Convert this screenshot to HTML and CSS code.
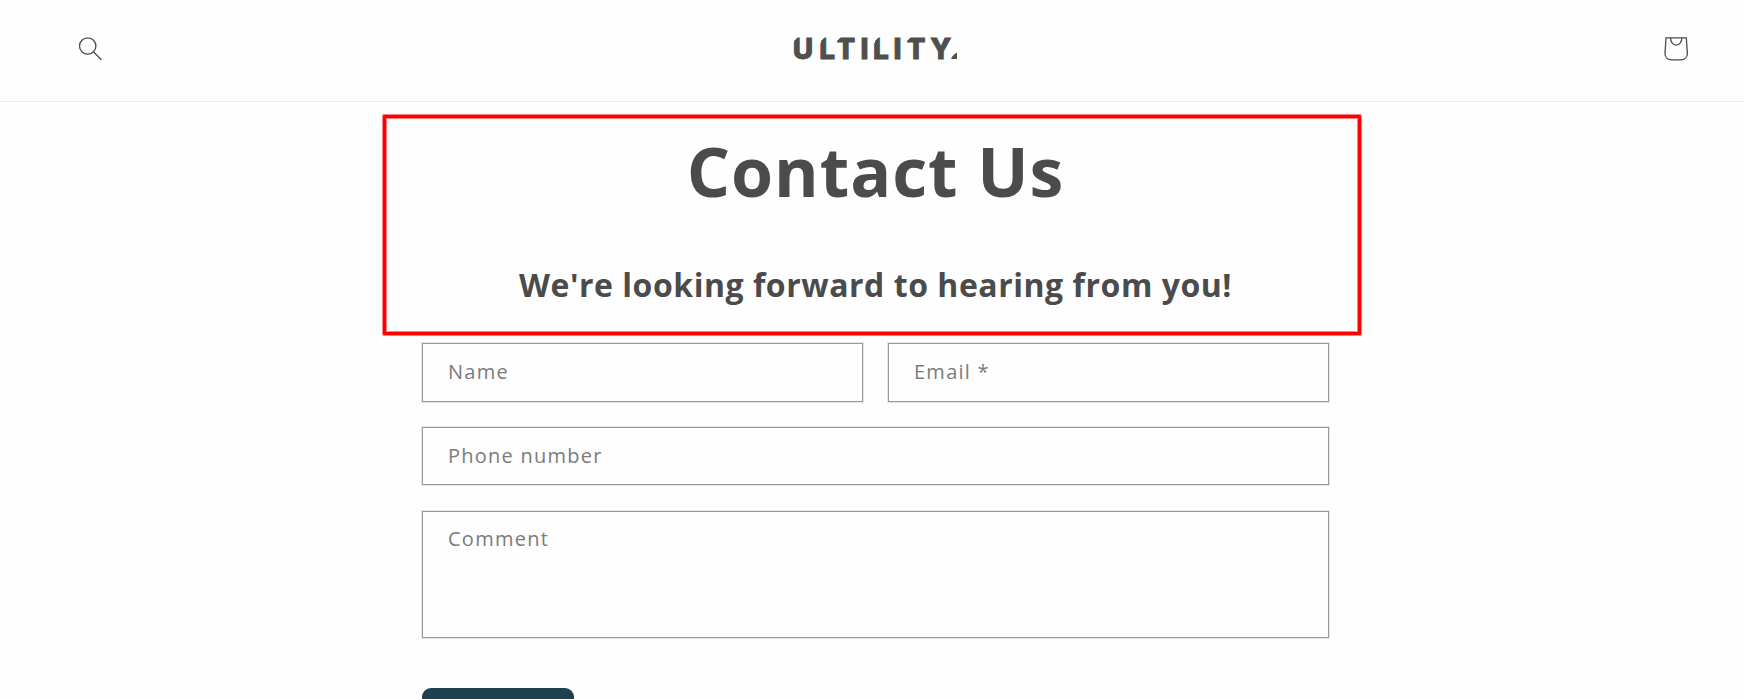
FILE: index.html
```
<!DOCTYPE html>
<html lang="en">
<head>
    <meta charset="utf-8">
    <title>Contact Us</title>
    <link rel="stylesheet" href="styles.css">
</head>
<body>
    <header class="header">
        <a class="icon" aria-label="Search">
            <svg width="26" height="26" viewBox="0 0 26 26">
                <circle cx="10.7" cy="10" r="8.2"/>
                <path d="M16.6 16L24.4 23.7"/>
            </svg>
        </a>
        <a class="logo" aria-label="Ultility">
            <svg width="164" height="22" viewBox="0 0 164 22">
                <text x="-1.3 25.3 42.3 66.6 79.1 99.6 112.6 136.2" y="20.6">ULTILITY</text>
                <path class="cut" d="M-1 -1H4L0 3V5H-1zM26 -1H31L27 3V5H26zM42 -1H47L43 3V5H42zM80 -1H85L81 3V5H80zM112 -1H117L113 3V5H112z"/>
                <path class="dot" d="M163 14.500V21H157Q158.500 16.500 163 14.500z"/>
            </svg>
        </a>
        <a class="icon" aria-label="Cart">
            <svg width="26" height="26" viewBox="0 0 26 26">
                <path d="M2 1.800H22.300L23.400 17.600C23.400 21.400 20.600 23.800 17 23.800H7.400C3.800 23.800 1 21.400 1 17.600z"/>
                <path d="M6.500 1.800C6.500 5.700 8.800 9.100 12.200 9.100S17.900 5.700 17.900 1.800"/>
            </svg>
        </a>
    </header>
    <main class="contact">
        <div class="intro">
            <h1>Contact Us</h1>
            <h2>We're looking forward to hearing from you!</h2>
        </div>
        <form class="contact-form">
            <div class="row">
                <input type="text" name="name" placeholder="Name">
                <input type="email" name="email" placeholder="Email *">
            </div>
            <input type="tel" name="phone" class="phone" placeholder="Phone number">
            <textarea name="comment" placeholder="Comment"></textarea>
            <button type="submit" class="btn" aria-label="Send"></button>
        </form>
    </main>
</body>
</html>
```
FILE: styles.css
```
* {
    box-sizing: border-box;
}
body {
    margin: 0;
    height: 699px;
    overflow: hidden;
    font-family: "Open Sans", sans-serif;
    color: #4b4b4b;
    background-color: #fefefe;
}
.header {
    display: flex;
    justify-content: space-between;
    align-items: flex-start;
    height: 102px;
    padding: 36px 54px 0 77px;
    border-bottom: 1px solid #ededed;
}
.header svg {
    display: block;
    overflow: visible;
}
.icon svg {
    fill: none;
    stroke: #4b4b4b;
    stroke-width: 1.3;
}
.logo {
    padding-top: 2px;
    margin-right: 16px;
}
.logo text {
    font-family: Inter, sans-serif;
    font-size: 28px;
    font-weight: 800;
    fill: #4f4f4d;
    stroke: #4f4f4d;
    stroke-width: 0.9;
}
.logo .cut {
    fill: #fefefe;
}
.logo .dot {
    fill: #4f4f4d;
}
.contact {
    display: flex;
    flex-direction: column;
    align-items: center;
    padding-top: 13px;
}
.intro {
    width: 978px;
    height: 220px;
    border: 3px solid #ff0000;
    border-radius: 1px;
    box-shadow: 0 0 0 1px #ff8080, inset 0 0 0 1px #ff8080;
    text-align: center;
    padding-left: 7px;
}
h1 {
    margin: 7px 0 0;
    font-size: 68px;
    line-height: 92px;
    letter-spacing: 0.95px;
}
h2 {
    margin: 46px 0 0;
    font-size: 32px;
    line-height: 44px;
    letter-spacing: 0.53px;
}
.contact-form {
    display: flex;
    flex-direction: column;
    align-items: flex-start;
    width: 907px;
    margin: 8px 0 0 7px;
}
.row {
    display: flex;
    gap: 25px;
    width: 100%;
    margin-bottom: 25px;
}
input, textarea {
    display: block;
    width: 100%;
    height: 59px;
    padding: 0 25px 2px;
    font-family: "Open Sans", sans-serif;
    font-size: 20px;
    letter-spacing: 1.25px;
    color: #4b4b4b;
    background-color: #fefefe;
    border: 1px solid #999;
    border-radius: 0;
    box-shadow: 0 0 0 1px #e6e6e6;
    outline: none;
}
.phone {
    height: 58px;
    margin-bottom: 26px;
}
textarea {
    height: 127px;
    padding-top: 13px;
    resize: none;
}
::placeholder {
    color: #7b7b7b;
    opacity: 1;
}
.btn {
    width: 152px;
    height: 56px;
    margin-top: 50px;
    border: none;
    border-radius: 9px;
    background-color: #1e404f;
}
```
